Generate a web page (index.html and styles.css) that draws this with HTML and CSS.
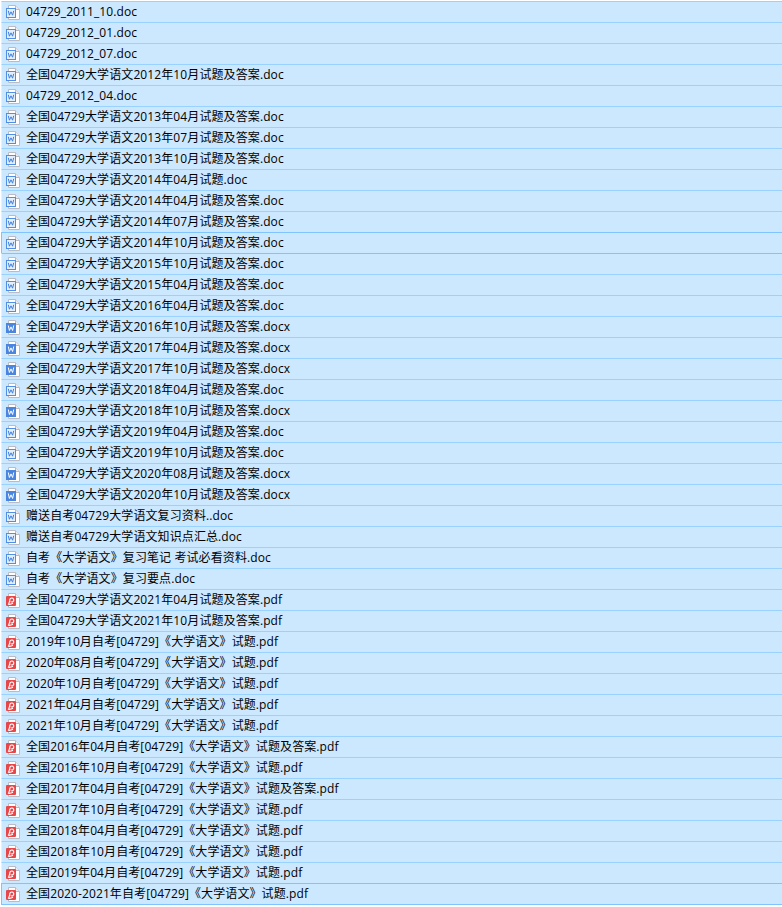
FILE: index.html
```html
<!DOCTYPE html>
<html lang="zh-CN">
<head>
<meta charset="utf-8">
<title>04729</title>
<link rel="stylesheet" href="styles.css">
</head>
<body>
<svg class="defs" width="0" height="0" aria-hidden="true">
<symbol id="sheet" viewBox="0 0 16 16"><path d="M3.500 1.500h7l4 4v10h-11z" fill="#fff" stroke="#b9bcc4"/><path d="M10.500 1.500v4h4" fill="#e9ebf0" stroke="#b9bcc4"/></symbol>
<symbol id="doc" viewBox="0 0 16 16"><use href="#sheet"/><rect x="1.500" y="4.500" width="9" height="9" fill="#e3effc" stroke="#4f8fe6"/><path d="M3.300 6.800l1.100 4.400 1.600-3.400 1.600 3.400 1.100-4.400" fill="none" stroke="#3f80dc"/></symbol>
<symbol id="docx" viewBox="0 0 16 16"><use href="#sheet"/><rect x="1" y="4" width="10" height="10" fill="#4a86e0"/><path d="M3.300 6.500l1.100 5 1.600-3.600 1.600 3.600 1.100-5" fill="none" stroke="#fff"/></symbol>
<symbol id="pdf" viewBox="0 0 16 16"><use href="#sheet"/><rect x="1" y="4" width="10" height="10" rx="1" fill="#e8474a"/><path d="M4.800 8.300a2 2 0 1 1 .8 1.300M5 7.500C4.700 9.500 4 11 3.500 12.300c1.500.2 3-.2 4.500-1" fill="none" stroke="#fff" stroke-width="1.100"/></symbol>
</svg>
<ul class="list">
<li class="row"><svg class="ico"><use href="#doc"/></svg><span>04729_2011_10.doc</span></li>
<li class="row"><svg class="ico"><use href="#doc"/></svg><span>04729_2012_01.doc</span></li>
<li class="row"><svg class="ico"><use href="#doc"/></svg><span>04729_2012_07.doc</span></li>
<li class="row"><svg class="ico"><use href="#doc"/></svg><span>全国04729大学语文2012年10月试题及答案.doc</span></li>
<li class="row"><svg class="ico"><use href="#doc"/></svg><span>04729_2012_04.doc</span></li>
<li class="row"><svg class="ico"><use href="#doc"/></svg><span>全国04729大学语文2013年04月试题及答案.doc</span></li>
<li class="row"><svg class="ico"><use href="#doc"/></svg><span>全国04729大学语文2013年07月试题及答案.doc</span></li>
<li class="row"><svg class="ico"><use href="#doc"/></svg><span>全国04729大学语文2013年10月试题及答案.doc</span></li>
<li class="row"><svg class="ico"><use href="#doc"/></svg><span>全国04729大学语文2014年04月试题.doc</span></li>
<li class="row"><svg class="ico"><use href="#doc"/></svg><span>全国04729大学语文2014年04月试题及答案.doc</span></li>
<li class="row"><svg class="ico"><use href="#doc"/></svg><span>全国04729大学语文2014年07月试题及答案.doc</span></li>
<li class="row strong"><svg class="ico"><use href="#doc"/></svg><span>全国04729大学语文2014年10月试题及答案.doc</span></li>
<li class="row"><svg class="ico"><use href="#doc"/></svg><span>全国04729大学语文2015年10月试题及答案.doc</span></li>
<li class="row"><svg class="ico"><use href="#doc"/></svg><span>全国04729大学语文2015年04月试题及答案.doc</span></li>
<li class="row"><svg class="ico"><use href="#doc"/></svg><span>全国04729大学语文2016年04月试题及答案.doc</span></li>
<li class="row"><svg class="ico"><use href="#docx"/></svg><span>全国04729大学语文2016年10月试题及答案.docx</span></li>
<li class="row"><svg class="ico"><use href="#docx"/></svg><span>全国04729大学语文2017年04月试题及答案.docx</span></li>
<li class="row"><svg class="ico"><use href="#docx"/></svg><span>全国04729大学语文2017年10月试题及答案.docx</span></li>
<li class="row"><svg class="ico"><use href="#doc"/></svg><span>全国04729大学语文2018年04月试题及答案.doc</span></li>
<li class="row"><svg class="ico"><use href="#docx"/></svg><span>全国04729大学语文2018年10月试题及答案.docx</span></li>
<li class="row"><svg class="ico"><use href="#doc"/></svg><span>全国04729大学语文2019年04月试题及答案.doc</span></li>
<li class="row"><svg class="ico"><use href="#doc"/></svg><span>全国04729大学语文2019年10月试题及答案.doc</span></li>
<li class="row"><svg class="ico"><use href="#docx"/></svg><span>全国04729大学语文2020年08月试题及答案.docx</span></li>
<li class="row"><svg class="ico"><use href="#docx"/></svg><span>全国04729大学语文2020年10月试题及答案.docx</span></li>
<li class="row"><svg class="ico"><use href="#doc"/></svg><span>赠送自考04729大学语文复习资料..doc</span></li>
<li class="row"><svg class="ico"><use href="#doc"/></svg><span>赠送自考04729大学语文知识点汇总.doc</span></li>
<li class="row"><svg class="ico"><use href="#doc"/></svg><span>自考《大学语文》复习笔记 考试必看资料.doc</span></li>
<li class="row"><svg class="ico"><use href="#doc"/></svg><span>自考《大学语文》复习要点.doc</span></li>
<li class="row"><svg class="ico"><use href="#pdf"/></svg><span>全国04729大学语文2021年04月试题及答案.pdf</span></li>
<li class="row"><svg class="ico"><use href="#pdf"/></svg><span>全国04729大学语文2021年10月试题及答案.pdf</span></li>
<li class="row"><svg class="ico"><use href="#pdf"/></svg><span>2019年10月自考[04729]《大学语文》试题.pdf</span></li>
<li class="row"><svg class="ico"><use href="#pdf"/></svg><span>2020年08月自考[04729]《大学语文》试题.pdf</span></li>
<li class="row"><svg class="ico"><use href="#pdf"/></svg><span>2020年10月自考[04729]《大学语文》试题.pdf</span></li>
<li class="row"><svg class="ico"><use href="#pdf"/></svg><span>2021年04月自考[04729]《大学语文》试题.pdf</span></li>
<li class="row"><svg class="ico"><use href="#pdf"/></svg><span>2021年10月自考[04729]《大学语文》试题.pdf</span></li>
<li class="row"><svg class="ico"><use href="#pdf"/></svg><span>全国2016年04月自考[04729]《大学语文》试题及答案.pdf</span></li>
<li class="row"><svg class="ico"><use href="#pdf"/></svg><span>全国2016年10月自考[04729]《大学语文》试题.pdf</span></li>
<li class="row"><svg class="ico"><use href="#pdf"/></svg><span>全国2017年04月自考[04729]《大学语文》试题及答案.pdf</span></li>
<li class="row"><svg class="ico"><use href="#pdf"/></svg><span>全国2017年10月自考[04729]《大学语文》试题.pdf</span></li>
<li class="row"><svg class="ico"><use href="#pdf"/></svg><span>全国2018年04月自考[04729]《大学语文》试题.pdf</span></li>
<li class="row"><svg class="ico"><use href="#pdf"/></svg><span>全国2018年10月自考[04729]《大学语文》试题.pdf</span></li>
<li class="row"><svg class="ico"><use href="#pdf"/></svg><span>全国2019年04月自考[04729]《大学语文》试题.pdf</span></li>
<li class="row strong last"><svg class="ico"><use href="#pdf"/></svg><span>全国2020-2021年自考[04729]《大学语文》试题.pdf</span></li>
</ul>
</body>
</html>
```
FILE: styles.css
```css
html, body {
  margin: 0;
  padding: 0;
  background: #fff;
}
.defs {
  position: absolute;
}
.list {
  list-style: none;
  margin: 0;
  padding: 1px 0 0 1px;
  font: 12px/20px "Open Sans", "Noto Sans CJK SC", sans-serif;
  letter-spacing: 0.1px;
  color: #000;
}
.row {
  display: flex;
  align-items: center;
  height: 20px;
  padding-left: 3px;
  background: #cce8ff;
  border-top: 1px solid #99d1ff;
  border-left: 1px solid #e4f2ff;
}
.strong {
  border-top-color: #7fc4ff;
  border-left-color: #7fc4ff;
}
.strong + .row {
  border-top-color: #7fc4ff;
}
.last {
  border-bottom: 1px solid #7fc4ff;
}
.ico {
  width: 16px;
  height: 16px;
  margin-right: 5px;
  flex: none;
}
```
